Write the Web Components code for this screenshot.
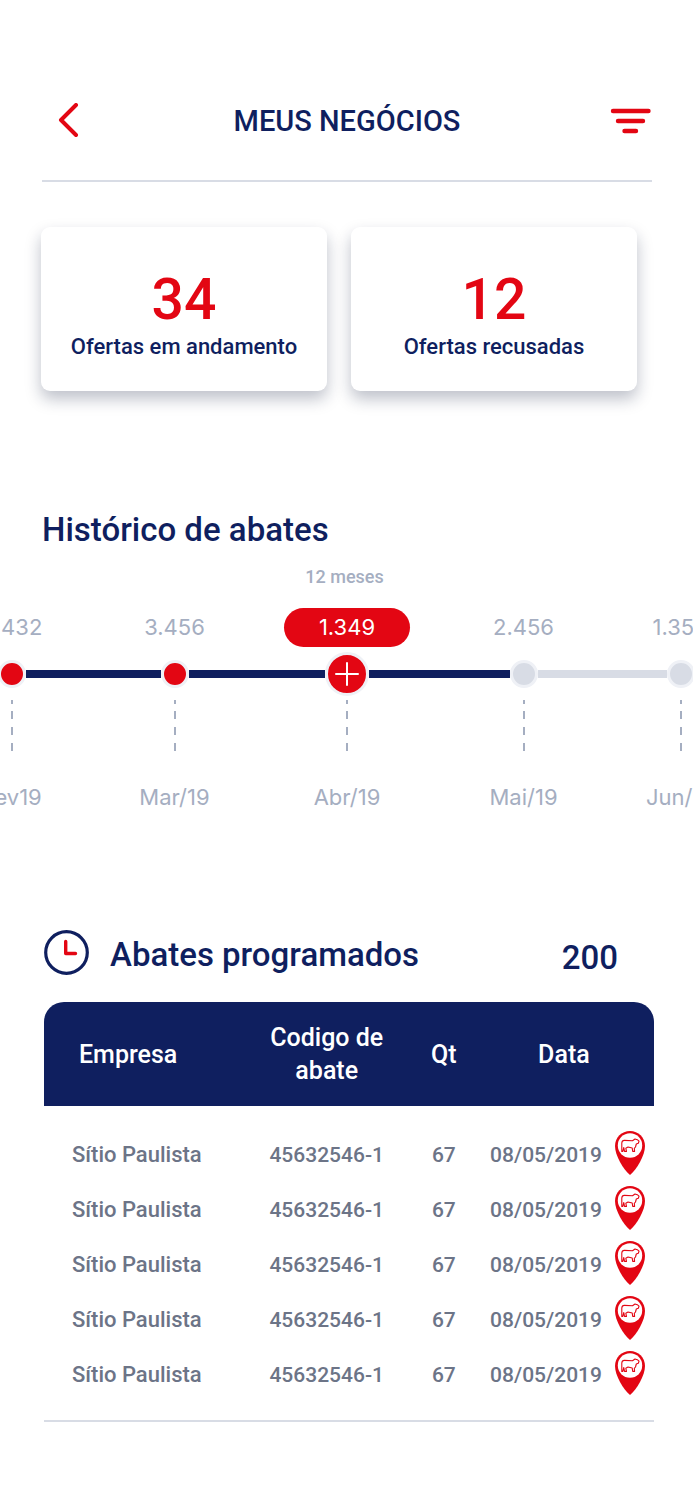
<!DOCTYPE html>
<html lang="pt-BR">
<head>
<meta charset="utf-8">
<meta name="viewport" content="width=device-width, initial-scale=1">
<title>Meus negócios</title>
<style>
:root{--navy:#0f1f5f;--red:#e30613;--muted:#a5aec1;--grey:#6c7487;--rule:#d8dce5;--ring:#eff1f6}
body{margin:0;background:#fff;color:var(--navy);font-family:Roboto,"Liberation Sans",sans-serif;font-weight:500}
</style>
</head>
<body>
<business-page></business-page>
<script>
const define = (name, html, setup) => {
  const template = document.createElement('template');
  template.innerHTML = html;
  customElements.define(name, class extends HTMLElement {
    constructor() {
      super();
      this.attachShadow({ mode: 'open' }).append(template.content.cloneNode(true));
    }
    connectedCallback() { if (setup) setup(this, this.shadowRoot); }
  });
};

define('app-header', `
<style>
:host{display:block;padding:62px 41px 0 42px}
header{display:grid;grid-template-columns:56px 1fr 56px;align-items:center;height:118px;border-bottom:2px solid var(--rule)}
h1{margin:0;text-align:center;font-size:29px;line-height:36px;font-weight:500}
button{border:0;padding:0;background:none;display:flex;width:100%;height:44px;align-items:center}
.back{padding-left:16px}
.filter{justify-content:flex-end}
</style>
<header>
  <button class="back" type="button" aria-label="Voltar"><svg width="22" height="36" viewBox="0 0 22 36" fill="none" stroke="#e30613" stroke-width="4" stroke-linecap="round" stroke-linejoin="round"><path d="M18 2 3 17 18 32"/></svg></button>
  <h1><slot></slot></h1>
  <button class="filter" type="button" aria-label="Filtrar"><svg width="42" height="26" viewBox="0 0 42 26" fill="none" stroke="#e30613" stroke-width="4.400" stroke-linecap="round"><path d="M3 3H38.500M8 13H33M14.500 23H26"/></svg></button>
</header>`);

define('stat-card', `
<style>
:host{display:flex;flex-direction:column;align-items:center;box-sizing:border-box;min-height:164px;padding:41px 8px 29px;border-radius:9px;background:#fff;box-shadow:0 8px 16px rgba(15,25,60,.27)}
.number{color:var(--red);font-size:57px;line-height:64px}
.label{font-size:22px;line-height:30px;text-align:center}
</style>
<div class="number"><slot name="number"></slot></div>
<div class="label"><slot></slot></div>`);

define('timeline-point', `
<style>
:host{display:flex;flex-direction:column;align-items:center;font-family:Inter,"Liberation Sans",sans-serif;font-weight:400;font-size:22px;line-height:26px;color:var(--muted);--before:var(--navy);--after:var(--navy);--dot:var(--red)}
:host([state=last]){--after:var(--rule);--dot:var(--rule)}
:host([state=next]){--before:var(--rule);--after:var(--rule);--dot:var(--rule)}
.value{box-sizing:border-box;height:39px;padding:6px 35px;border-radius:20px}
:host([active]) .value{background:var(--red);color:#fff}
.track{display:flex;align-items:center;align-self:stretch;height:44px;margin-top:5px}
.track::before,.track::after{content:"";flex:1;height:8px;background:var(--before)}
.track::after{background:var(--after)}
button{flex:none;display:flex;align-items:center;justify-content:center;box-sizing:border-box;width:28px;height:28px;padding:0;border:3px solid var(--ring);border-radius:50%;background:var(--dot)}
button svg{display:none}
:host([active]) button{width:44px;height:44px}
:host([active]) button svg{display:block}
.dash{margin:4px 0 33px}
</style>
<span class="value"><slot></slot></span>
<div class="track"><button type="button"><svg width="24" height="24" viewBox="0 0 24 24" stroke="#fff" stroke-width="2" stroke-linecap="round"><path d="M12 1V23M1 12H23"/></svg></button></div>
<svg class="dash" width="2" height="51" viewBox="0 0 2 51"><path d="M1 0V51" stroke="#a5aec1" stroke-width="2" stroke-dasharray="4 7 8 8 8 8 8"/></svg>
<span class="month"><slot name="month"></slot></span>`,
(host, root) => root.querySelector('button').setAttribute('aria-label', 'Abates de ' + host.querySelector('[slot=month]').textContent));

define('slaughter-history', `
<style>
:host{display:block;overflow:hidden}
h2{margin:0 42px;font-size:33px;line-height:44px;font-weight:500}
p{margin:13px 0 19px;padding-right:4px;text-align:center;color:var(--muted);font-size:18px;line-height:24px}
.points{display:grid;grid-template-columns:162fr 163fr 182fr 171fr 143fr;margin:0 -59px 0 -69px}
</style>
<h2><slot name="title"></slot></h2>
<p><slot name="period"></slot></p>
<div class="points"><slot></slot></div>`);

define('schedule-heading', `
<style>
:host{display:flex;align-items:center;padding:0 75px 0 44px}
h2{flex:1;margin:5px 0 0 21px;font-size:33px;line-height:44px;font-weight:500}
strong{margin-top:11px;font-size:33px;line-height:44px;font-weight:500}
</style>
<svg width="45" height="45" viewBox="0 0 45 45" fill="none"><circle cx="22.5" cy="22.5" r="20.8" stroke="#0f1f5f" stroke-width="3.2"/><path d="M21.700 11.500V23.500H31.500" stroke="#e30613" stroke-width="3.4" stroke-linecap="round" stroke-linejoin="round"/></svg>
<h2><slot></slot></h2>
<strong><slot name="total"></slot></strong>`);

define('location-pin', `
<style>
:host{display:block}
button{display:block;border:0;padding:0;background:none}
svg{display:block}
</style>
<button type="button" aria-label="Ver localização"><svg width="30" height="44" viewBox="0 0 30 44"><path fill="#e30613" d="M15 0C6.700 0 0 6.600 0 15c0 5 2 10 5 16 3 5.600 6.500 10 10 13 3.500-3 7-7.400 10-13 3-6 5-11 5-16C30 6.600 23.300 0 15 0Z"/><circle cx="15" cy="14.500" r="12.200" fill="#fff"/><path fill="none" stroke="#e30613" stroke-width="1.100" stroke-linejoin="round" d="M6.800 18.500V12Q7 9.300 9.500 9.400L17.500 9.700 20 8 22.300 8.700 24 10.200 23.300 12.200 21.300 13 20.500 16 19.300 17.300 19.600 20.400H17.700L17.200 17 13 16 10.800 17.200 11.500 20.400H9.500L8.800 16.500 7.800 20.400H6.800Z"/></svg></button>`);

define('schedule-table', `
<style>
:host{display:block;margin:0 39px 0 44px;padding-bottom:18px;border-bottom:2px solid var(--rule)}
table{width:100%;table-layout:fixed;border-collapse:separate;border-spacing:0}
.company{width:33.7%}.code{width:25.3%}.qty{width:13.1%}.date{width:20.4%}
th,td{padding:0;text-align:center;font-weight:500}
th{height:104px;background:var(--navy);color:#fff;font-size:25px;line-height:33px}
th:first-child{padding-left:35px;text-align:left;border-top-left-radius:20px}
th:last-child{padding-right:10px;border-top-right-radius:20px}
tbody::before{content:"";display:block;height:21px}
td{height:55px;color:var(--grey);font-size:21px;line-height:30px}
td:first-child{padding-left:28px;text-align:left;font-size:22px}
location-pin{margin:0 0 4px 7px}
</style>
<table>
  <colgroup><col class="company"><col class="code"><col class="qty"><col class="date"><col></colgroup>
  <thead><tr><th scope="col">Empresa</th><th scope="col">Codigo de<br>abate</th><th scope="col">Qt</th><th scope="col" colspan="2">Data</th></tr></thead>
  <tbody></tbody>
</table>`, (host, root) => {
  const body = root.querySelector('tbody');
  const entries = Array.from({ length: 5 }, () => ['Sítio Paulista', '45632546-1', '67', '08/05/2019']);
  for (const entry of entries) {
    const row = body.insertRow();
    for (const text of entry) row.insertCell().textContent = text;
    row.insertCell().append(document.createElement('location-pin'));
  }
});

define('business-page', `
<style>
:host{display:block;padding-bottom:78px}
.stats{display:grid;grid-template-columns:1fr 1fr;gap:24px;margin:45px 56px 0 41px}
slaughter-history{margin-top:117px}
schedule-heading{margin-top:115px}
schedule-table{margin-top:22px}
</style>
<app-header>MEUS NEGÓCIOS</app-header>
<main>
  <section class="stats">
    <stat-card><span slot="number">34</span>Ofertas em andamento</stat-card>
    <stat-card><span slot="number">12</span>Ofertas recusadas</stat-card>
  </section>
  <slaughter-history>
    <span slot="title">Histórico de abates</span>
    <span slot="period">12 meses</span>
    <timeline-point>3.432<span slot="month">Fev19</span></timeline-point>
    <timeline-point>3.456<span slot="month">Mar/19</span></timeline-point>
    <timeline-point active>1.349<span slot="month">Abr/19</span></timeline-point>
    <timeline-point state="last">2.456<span slot="month">Mai/19</span></timeline-point>
    <timeline-point state="next">1.354<span slot="month">Jun/19</span></timeline-point>
  </slaughter-history>
  <schedule-heading>Abates programados<span slot="total">200</span></schedule-heading>
  <schedule-table></schedule-table>
</main>`);
</script>
</body>
</html>
